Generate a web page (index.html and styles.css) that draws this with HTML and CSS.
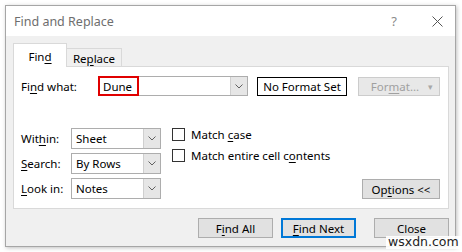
FILE: index.html
```html
<!DOCTYPE html>
<html lang="en">
<head>
  <meta charset="UTF-8">
  <title>Find and Replace</title>
  <link rel="stylesheet" href="styles.css">
</head>
<body>
  <div class="window">
    <div class="titlebar">
      <span class="title">Find and Replace</span>
      <span class="help">?</span>
      <svg class="close-x" width="11" height="11" viewBox="0 0 11 11">
        <path d="M0.5 0.5 L10.5 10.5 M10.5 0.5 L0.5 10.5" stroke="#555" stroke-width="1" fill="none"/>
      </svg>
    </div>

    <div class="content">
      <div class="tabs">
        <div class="tab active"><span>Fin<u>d</u></span></div>
        <div class="tab"><span>Re<u>p</u>lace</span></div>
      </div>

      <div class="panel">
        <div class="row-find">
          <label class="lbl-find">Fi<u>n</u>d what:</label>
          <div class="combo wide">
            <span class="combo-text highlight">Dune</span>
            <span class="drop">
              <svg width="8" height="5" viewBox="0 0 8 5"><path d="M0.5 0.5 L4 4 L7.5 0.5" stroke="#606060" fill="none"/></svg>
            </span>
          </div>
          <div class="noformat">No Format Set</div>
          <div class="btn disabled format"><span>For<u>m</u>at...</span><span class="tri">&#9662;</span></div>
        </div>

        <div class="lower">
          <div class="selects">
            <div class="sel-row">
              <label class="lbl">Wit<u>h</u>in:</label>
              <div class="combo small"><span class="combo-text">Sheet</span><span class="drop"><svg width="8" height="5" viewBox="0 0 8 5"><path d="M0.5 0.5 L4 4 L7.5 0.5" stroke="#606060" fill="none"/></svg></span></div>
            </div>
            <div class="sel-row">
              <label class="lbl"><u>S</u>earch:</label>
              <div class="combo small"><span class="combo-text">By Rows</span><span class="drop"><svg width="8" height="5" viewBox="0 0 8 5"><path d="M0.5 0.5 L4 4 L7.5 0.5" stroke="#606060" fill="none"/></svg></span></div>
            </div>
            <div class="sel-row">
              <label class="lbl"><u>L</u>ook in:</label>
              <div class="combo small"><span class="combo-text">Notes</span><span class="drop"><svg width="8" height="5" viewBox="0 0 8 5"><path d="M0.5 0.5 L4 4 L7.5 0.5" stroke="#606060" fill="none"/></svg></span></div>
            </div>
          </div>

          <div class="checks">
            <div class="check"><span class="box"></span><span>Match <u>c</u>ase</span></div>
            <div class="check"><span class="box"></span><span>Match entire cell c<u>o</u>ntents</span></div>
          </div>

          <div class="btn options"><span>Op<u>t</u>ions &lt;&lt;</span></div>
        </div>
      </div>

      <div class="footer">
        <div class="btn"><span>F<u>i</u>nd All</span></div>
        <div class="btn default"><span><u>F</u>ind Next</span></div>
        <div class="btn close">Close</div>
      </div>
    </div>
  </div>

  <span class="watermark">wsxdn.com</span>
</body>
</html>
```

FILE: styles.css
```css
body {
  margin: 0;
  background: #ffffff;
  font-family: "Noto Sans", "Open Sans", sans-serif;
  font-size: 11.5px;
  color: #000;
  width: 462px;
  height: 252px;
  overflow: hidden;
  position: relative;
}
u { text-underline-offset: 2px; }

.window {
  margin: 5px 0 0 5px;
  width: 451px;
  height: 242px;
  box-sizing: border-box;
  border: 1px solid #a6a6a6;
  box-shadow: 1px 1px 4px rgba(0, 0, 0, 0.25);
  background: #f0f0f0;
  display: flex;
  flex-direction: column;
}

.titlebar {
  height: 30px;
  flex: none;
  background: #fff;
  display: flex;
  align-items: center;
  padding-left: 8px;
}
.title {
  color: #6e6e6e;
  font-size: 12.5px;
  flex: 1;
}
.help {
  color: #8a8a8a;
  font-size: 13px;
  margin-right: 35px;
}
.close-x { margin-right: 12px; }

.content {
  flex: 1;
  padding: 7px 6px 0 7px;
  display: flex;
  flex-direction: column;
}

.tabs {
  display: flex;
  align-items: flex-end;
  height: 23px;
}
.tab {
  height: 18px;
  width: 55px;
  box-sizing: border-box;
  border: 1px solid #d9d9d9;
  border-left: none;
  border-bottom: none;
  background: #f0f0f0;
  display: flex;
  align-items: center;
  justify-content: center;
  padding-top: 1px;
}
.tab.active {
  height: 24px;
  width: 54px;
  border-left: 1px solid #d9d9d9;
  background: #fff;
  margin-bottom: -1px;
  position: relative;
  z-index: 1;
}

.panel {
  height: 143px;
  box-sizing: border-box;
  border: 1px solid #d9d9d9;
  background: #fff;
  padding: 9px 8px 0 7px;
}

.row-find {
  display: flex;
  align-items: center;
  height: 20px;
}
.lbl-find { width: 77px; }

.combo {
  display: flex;
  box-sizing: border-box;
  border: 1px solid #adadad;
  background: #fff;
}
.combo.wide { width: 150px; height: 20px; }
.combo.small { width: 90px; height: 21px; }
.combo-text {
  flex: 1;
  display: flex;
  align-items: center;
  padding-left: 4px;
}
.combo-text.highlight {
  flex: none;
  width: 41px;
  box-sizing: border-box;
  border: 2px solid #e00000;
  margin: -1px 0 -1px -1px;
  padding-left: 3px;
}
.combo.wide .highlight + .drop { margin-left: auto; }
.drop {
  width: 16px;
  background: #e6e6e6;
  border-left: 1px solid #cfcfcf;
  display: flex;
  align-items: center;
  justify-content: center;
}

.noformat {
  margin-left: 9px;
  width: 90px;
  height: 19px;
  box-sizing: border-box;
  border: 1px solid #000;
  display: flex;
  align-items: center;
  justify-content: center;
}

.btn {
  box-sizing: border-box;
  border: 1px solid #adadad;
  background: #e1e1e1;
  display: flex;
  align-items: center;
  justify-content: center;
  height: 20px;
}
.btn.disabled {
  color: #a0a0a0;
  background: #e8e8e8;
  border-color: #cccccc;
}
.format {
  margin-left: 11px;
  width: 82px;
  height: 19px;
  padding-left: 6px;
}
.tri {
  font-size: 9px;
  margin-left: 9px;
  color: #a8a8a8;
}

.lower {
  display: flex;
  margin-top: 32px;
}
.selects {
  display: flex;
  flex-direction: column;
  gap: 4px;
}
.sel-row {
  display: flex;
  align-items: center;
}
.lbl { width: 50px; }

.checks {
  margin-left: 11px;
  margin-top: -1px;
  display: flex;
  flex-direction: column;
  gap: 7px;
}
.check {
  display: flex;
  align-items: center;
  height: 14px;
}
.box {
  width: 11px;
  height: 11px;
  border: 1px solid #333;
  background: #fff;
  margin-right: 6px;
}

.options {
  margin-left: auto;
  align-self: flex-end;
  width: 78px;
}

.footer {
  display: flex;
  justify-content: flex-end;
  margin-top: 9px;
}
.footer .btn { width: 75px; }
.footer .default {
  margin-left: 8px;
  border: 2px solid #0078d7;
}
.footer .close { margin-left: 18px; }

.watermark {
  position: absolute;
  left: 386px;
  top: 236px;
  font-family: "DejaVu Sans", sans-serif;
  font-size: 12.5px;
  line-height: 12px;
  color: #222;
  background: rgba(255, 255, 255, 0.9);
  padding: 0 2px 1px;
}
```
